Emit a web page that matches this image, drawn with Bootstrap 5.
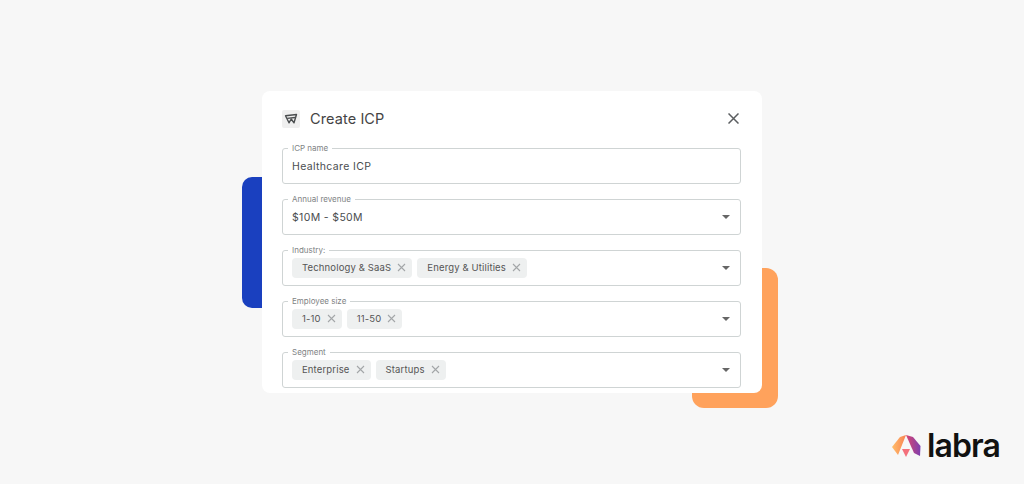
<!DOCTYPE html>
<html>
  <head>
    <title>Create ICP</title>
    <link
      href="https://cdn.jsdelivr.net/npm/bootstrap@5.3.3/dist/css/bootstrap.min.css"
      rel="stylesheet"
    />
    <style>
      html, body { height: 100%; }
      body {
        background: #f7f7f7;
        font-family: "Inter", "Liberation Sans", sans-serif;
        color: #4a4d4f;
        overflow: hidden;
      }
      .stage { height: 484px; position: relative; }
      .dialog-wrap { position: relative; width: 500px; height: 302px; }
      .deco-blue {
        position: absolute; left: -20px; top: 86px;
        width: 40px; height: 131px;
        background: #1a40bf; border-radius: 10px;
      }
      .deco-orange {
        position: absolute; left: 430px; top: 177px;
        width: 86px; height: 140px;
        background: #ffa25c; border-radius: 12px;
      }
      .dialog {
        position: relative; height: 302px;
        background: #fff; border-radius: 8px;
        padding: 19px 21px 0 20px;
      }
      .dialog-head { height: 18px; margin-bottom: 20px; }
      .head-icon {
        width: 18px; height: 18px; margin-right: 10px;
        background: #efefef; border-radius: 2px;
      }
      .head-close { margin-right: 2px; margin-bottom: 1px; }
      .dialog-title { font-size: 14.5px; line-height: 18px; color: #444; letter-spacing: .1px; }
      .fields { gap: 15.5px; }
      .field {
        position: relative; height: 35.5px;
        border: 1px solid #cfd4d4; border-radius: 3px;
        padding: 0 9px;
      }
      .field-label {
        position: absolute; left: 5px; top: -6px;
        padding: 0 4px; background: #fff;
        font-size: 8px; line-height: 11px; color: #808384;
      }
      .field-value { font-size: 10.5px; padding-top: 2px; letter-spacing: .35px; color: #4a4d4f; }
      .chip-row { gap: 5px; }
      .chip {
        height: 20px; padding: 0 6px 0 10px; gap: 6px;
        background: #eef0f0; border-radius: 4px;
        font-size: 9.5px; letter-spacing: .15px; color: #555;
        white-space: nowrap;
      }
      .caret-down {
        width: 0; height: 0;
        margin-left: auto; margin-right: 1px;
        border-left: 4px solid transparent;
        border-right: 4px solid transparent;
        border-top: 4px solid #666;
      }
      .logo {
        position: absolute; left: 892px; top: 429px;
      }
      .logo-mark { margin-right: 6px; }
      .logo-text {
        font-size: 32px; line-height: 34px; font-weight: 600;
        color: #111; letter-spacing: -.9px;
      }
    </style>
  </head>
  <body>
    <main class="stage d-flex align-items-center justify-content-center">
      <div class="dialog-wrap">
        <div class="deco-blue"></div>
        <div class="deco-orange"></div>
        <div class="dialog d-flex flex-column">
          <div class="dialog-head d-flex align-items-center">
            <div class="head-icon d-flex align-items-center justify-content-center flex-shrink-0">
              <svg width="14" height="12" viewBox="0 0 14 12" fill="none" stroke="#4a4d4f" stroke-width="1.4" stroke-linejoin="round">
                <path d="M1.5 2.8 L12.5 1.5 L10 9.8 L7.2 6 L5 9.8 Z" />
                <path d="M3.2 5.4 L11 4.5" />
              </svg>
            </div>
            <div class="dialog-title">Create ICP</div>
            <svg class="head-close ms-auto" width="11" height="11" viewBox="0 0 11 11" stroke="#5b5e60" stroke-width="1.5">
              <path d="M.5 .5 L10.5 10.5 M10.5 .5 L.5 10.5" />
            </svg>
          </div>

          <div class="fields d-flex flex-column">
            <div class="field d-flex align-items-center">
              <span class="field-label">ICP name</span>
              <span class="field-value">Healthcare ICP</span>
            </div>
            <div class="field d-flex align-items-center">
              <span class="field-label">Annual revenue</span>
              <span class="field-value">$10M - $50M</span>
              <span class="caret-down"></span>
            </div>
            <div class="field d-flex align-items-center">
              <span class="field-label">Industry:</span>
              <div class="chip-row d-flex" id="industryChips"></div>
              <span class="caret-down"></span>
            </div>
            <div class="field d-flex align-items-center">
              <span class="field-label">Employee size</span>
              <div class="chip-row d-flex" id="sizeChips"></div>
              <span class="caret-down"></span>
            </div>
            <div class="field d-flex align-items-center">
              <span class="field-label">Segment</span>
              <div class="chip-row d-flex" id="segmentChips"></div>
              <span class="caret-down"></span>
            </div>
          </div>
        </div>
      </div>

      <div class="logo d-flex align-items-center">
        <svg class="logo-mark" width="29" height="25" viewBox="0 0 29 25">
          <defs>
            <linearGradient id="logoLeft" x1="0" y1="0" x2="1" y2="0">
              <stop offset="0" stop-color="#ffbe6a" />
              <stop offset="1" stop-color="#f98252" />
            </linearGradient>
            <linearGradient id="logoRight" x1="0" y1="0" x2="1" y2="0">
              <stop offset="0" stop-color="#d9466f" />
              <stop offset="1" stop-color="#7d3fb0" />
            </linearGradient>
          </defs>
          <path d="M0 13 L8 3 L14 1 L6 21 Z" fill="url(#logoLeft)" />
          <path d="M14 1 L21 3 L28.5 12 L28 22 L22 19 Z" fill="url(#logoRight)" />
          <path d="M10 15 L18 15 L14 23 Z" fill="#f4707c" />
        </svg>
        <span class="logo-text">labra</span>
      </div>
    </main>

    <script>
      const chipData = {
        industryChips: ["Technology & SaaS", "Energy & Utilities"],
        sizeChips: ["1-10", "11-50"],
        segmentChips: ["Enterprise", "Startups"],
      };

      for (const id in chipData) {
        const holder = document.querySelector("#" + id);
        chipData[id].forEach((name) => {
          const chip = document.createElement("span");
          chip.className = "chip d-inline-flex align-items-center";
          chip.innerHTML = `${name}<svg width="9" height="9" viewBox="0 0 9 9" stroke="#a3a6a8" stroke-width="1.1"><path d="M1 1 L8 8 M8 1 L1 8" /></svg>`;
          holder.appendChild(chip);
        });
      }
    </script>
    <script src="https://cdn.jsdelivr.net/npm/bootstrap@5.3.3/dist/js/bootstrap.bundle.min.js"></script>
  </body>
</html>
